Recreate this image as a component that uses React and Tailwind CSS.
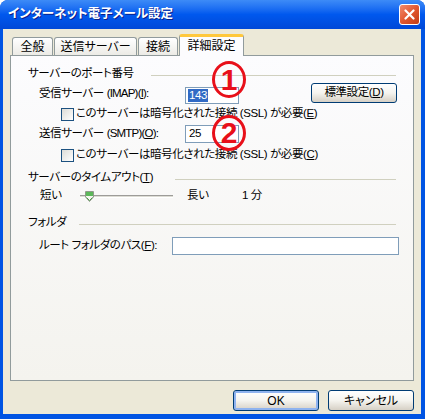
import React from "react";

const Check = ({ children }) => (
  <div className="flex items-center h-full">
    <span className="w-[13px] h-[13px] border border-[#1c5180] bg-linear-to-br from-[#dcdcd7] to-white mr-[2px]" />
    <span>{children}</span>
  </div>
);

const Heading = ({ children, gap }) => (
  <div className="flex items-center h-[16px]">
    <span>{children}</span>
    <span className={"flex-1 h-px bg-[#d0d0bf] mt-[2px] " + gap} />
  </div>
);

const XpButton = ({ children, primary, className }) => (
  <button
    className={
      "rounded-[3px] border border-[#003c74] bg-linear-to-b from-white via-[#f5f4ef] to-[#d6d0c5] text-black leading-none " +
      (primary ? "shadow-[inset_0_0_0_2px_#8fb3ef] " : "") +
      className
    }
  >
    {children}
  </button>
);

const Badge = ({ n, className }) => (
  <div
    className={
      "absolute left-[201px] w-[34px] rounded-[50%] border-[3px] border-[#e8101a] flex items-center justify-center text-[#e8101a] text-[30px] font-bold leading-none tracking-normal " +
      className
    }
  >
    {n}
  </div>
);

export default function App() {
  return (
    <div className="w-[425px] h-[419px] bg-white font-['Liberation_Sans','Noto_Sans_CJK_JP',sans-serif] [font-feature-settings:'palt'] text-[11.5px] tracking-[-0.4px] text-black">
      <div className="w-full h-full flex flex-col rounded-t-[8px] bg-[#0054e3] overflow-hidden">
        {/* title bar */}
        <div className="h-[29px] flex items-center justify-between pl-[8px] pr-[5px] bg-linear-to-b from-[#3d8bf7] via-[#0058ee] to-[#0048d8]">
          <span className="text-white font-bold text-[12.5px] tracking-normal [text-shadow:1px_1px_0_#0a1e8a]">
            インターネット電子メール設定
          </span>
          <div className="w-[21px] h-[21px] rounded-[3px] border border-white bg-linear-to-br from-[#f08a6c] via-[#e2572f] to-[#c23c16] flex items-center justify-center">
            <svg width="11" height="11" viewBox="0 0 11 11">
              <path d="M1.5 1.5 L9.5 9.5 M9.5 1.5 L1.5 9.5" stroke="white" strokeWidth="2.2" strokeLinecap="round" />
            </svg>
          </div>
        </div>

        {/* body */}
        <div className="flex-1 ml-[3px] mr-[4px] mb-[5px] bg-[#ece9d8] flex flex-col pt-[5px]">
          {/* tabs */}
          <div className="flex items-end h-[21px] pl-[9px] text-[12px] tracking-normal">
            <div className="w-[41px] h-[18px] mr-px border border-b-0 border-[#919b9c] rounded-t-[3px] bg-linear-to-b from-white to-[#ecebe6] flex items-center justify-center">
              全般
            </div>
            <div className="w-[83px] h-[18px] mr-px border border-b-0 border-[#919b9c] rounded-t-[3px] bg-linear-to-b from-white to-[#ecebe6] flex items-center justify-center">
              送信サーバー
            </div>
            <div className="w-[40px] h-[18px] mr-px border border-b-0 border-[#919b9c] rounded-t-[3px] bg-linear-to-b from-white to-[#ecebe6] flex items-center justify-center">
              接続
            </div>
            <div className="relative z-10 w-[65px] h-[22px] -mb-px border-x border-[#919b9c] border-t-[3px] border-t-[#ffc83c] rounded-t-[3px] bg-[#fcfcfe] flex items-center justify-center pb-[2px]">
              詳細設定
            </div>
          </div>

          {/* panel */}
          <div className="relative h-[326px] mx-[7px] border border-[#919b9c] bg-linear-to-b from-[#fcfcfe] to-[#f4f3ee] flex flex-col px-[17px]">
            <div className="mt-[10px]">
              <Heading gap="ml-[17px]">サーバーのポート番号</Heading>
            </div>

            <div className="flex items-start h-[22px] pl-[11px]">
              <span className="w-[146px] mt-[3px]">
                受信サーバー <span className="tracking-[-0.8px]">(IMAP)(<u>I</u>):</span>
              </span>
              <div className="w-[54px] h-[17px] mt-[5px] border border-[#7f9db9] bg-white flex items-center pl-[2px]">
                <span className="bg-[#316ac5] text-white leading-[13px] px-px">143</span>
              </div>
              <div className="flex-1" />
              <XpButton className="w-[86px] h-[20px] mt-px -mr-[1px]">
                標準設定(<u>D</u>)
              </XpButton>
            </div>

            <div className="h-[20px] pl-[33px]">
              <Check>
                このサーバーは暗号化された接続 (SSL) が必要(<u>E</u>)
              </Check>
            </div>

            <div className="flex items-center h-[20px] pl-[11px]">
              <span className="w-[146px]">
                送信サーバー <span className="tracking-[-0.8px]">(SMTP)(<u>O</u>):</span>
              </span>
              <div className="w-[54px] h-[18px] border border-[#7f9db9] bg-white flex items-center pl-[3px]">
                25
              </div>
            </div>

            <div className="h-[22px] pl-[33px]">
              <Check>
                このサーバーは暗号化された接続 (SSL) が必要(<u>C</u>)
              </Check>
            </div>

            <div className="mt-[4px]">
              <Heading gap="ml-[22px]">
                サーバーのタイムアウト(<u>T</u>)
              </Heading>
            </div>

            <div className="flex items-center h-[20px] pl-[12px]">
              <span className="w-[40px]">短い</span>
              <div className="relative w-[93px] h-[12px] flex items-center">
                <div className="w-full h-[3px] border-t border-[#9d9c99] border-b border-b-white bg-[#dcdcd4]" />
                <svg className="absolute left-[5px] top-[1px]" width="9" height="11" viewBox="0 0 9 11">
                  <path d="M0.5 0.5 H8.5 V6 L4.5 10.5 L0.5 6 Z" fill="#f4f4ef" stroke="#8f9a8a" />
                  <rect x="1" y="1" width="7" height="4" fill="#5cb85a" />
                  <path d="M1.5 6.5 L4.5 9.5 L7.5 6.5" fill="none" stroke="#4f9a4a" />
                </svg>
              </div>
              <span className="ml-[14px] w-[55px]">長い</span>
              <span>1 分</span>
            </div>

            <div className="mt-[9px]">
              <Heading gap="ml-[13px]">フォルダ</Heading>
            </div>

            <div className="flex items-center h-[21px] mt-[4px] pl-[11px]">
              <span className="w-[133px]">
                ルート フォルダのパス(<u>F</u>):
              </span>
              <div className="flex-1 h-[18px] -mr-[3px] border border-[#7f9db9] bg-white" />
            </div>

            {/* red annotation marks */}
            <Badge n="1" className="top-[5px] h-[37px]" />
            <Badge n="2" className="top-[59px] h-[36px]" />
          </div>

          {/* buttons */}
          <div className="flex justify-end gap-[9px] mt-[9px] mr-[7px] text-[12px] tracking-normal">
            <XpButton primary className="w-[86px] h-[21px]">
              OK
            </XpButton>
            <XpButton className="w-[86px] h-[21px]">キャンセル</XpButton>
          </div>
        </div>
      </div>
    </div>
  );
}
